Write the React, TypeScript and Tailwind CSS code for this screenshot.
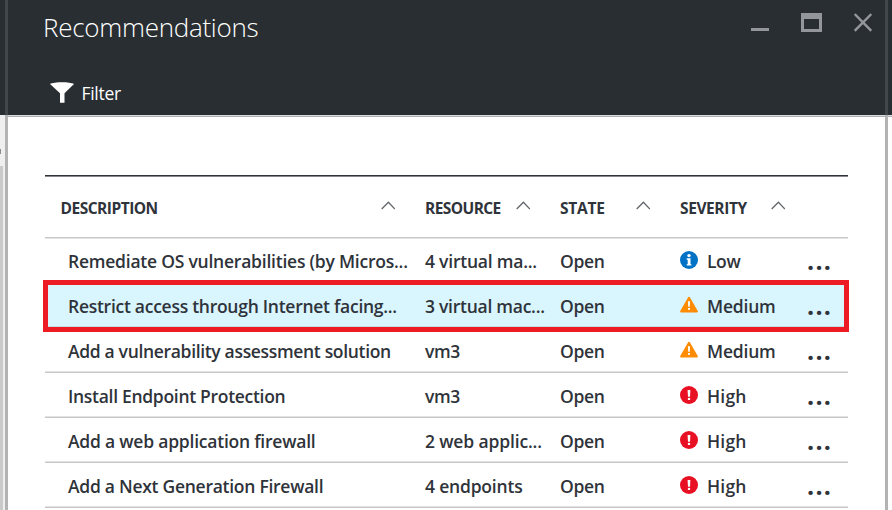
import React from "react";

type Severity = "Low" | "Medium" | "High";

interface Row {
  description: string;
  descTrack: string;
  resource: string;
  resTrack: string;
  severity: Severity;
  selected?: boolean;
}

const rows: Row[] = [
  { description: "Remediate OS vulnerabilities (by Micros...", descTrack: "tracking-[-0.23px]", resource: "4 virtual ma...", resTrack: "tracking-[-0.22px]", severity: "Low" },
  { description: "Restrict access through Internet facing...", descTrack: "tracking-[-0.27px]", resource: "3 virtual mac...", resTrack: "tracking-[-0.26px]", severity: "Medium", selected: true },
  { description: "Add a vulnerability assessment solution", descTrack: "tracking-[-0.33px]", resource: "vm3", resTrack: "tracking-[-0.4px]", severity: "Medium" },
  { description: "Install Endpoint Protection", descTrack: "tracking-[-0.3px]", resource: "vm3", resTrack: "tracking-[-0.4px]", severity: "High" },
  { description: "Add a web application firewall", descTrack: "tracking-[-0.22px]", resource: "2 web applic...", resTrack: "tracking-[-0.15px]", severity: "High" },
  { description: "Add a Next Generation Firewall", descTrack: "tracking-[-0.27px]", resource: "4 endpoints", resTrack: "tracking-[-0.2px]", severity: "High" },
];

const severityTrack: Record<Severity, string> = {
  Low: "tracking-[-0.4px]",
  Medium: "tracking-[-0.2px]",
  High: "tracking-[0.2px]",
};

function SeverityIcon({ severity }: { severity: Severity }) {
  if (severity === "Medium") {
    return (
      <svg className="block h-[18px] w-[18px]" viewBox="0 0 18 18">
        <path d="M9 1.8 L16.9 15.4 H1.1 Z" fill="#ff8c00" stroke="#ff8c00" strokeWidth="2" strokeLinejoin="round" />
        <path d="M7.9 5.2 H10.1 L9.8 10.8 H8.2 Z" fill="#fff" />
        <rect x="8" y="12" width="2" height="1.8" fill="#fff" />
      </svg>
    );
  }
  if (severity === "Low") {
    return (
      <svg className="block h-[18px] w-[18px]" viewBox="0 0 18 18">
        <circle cx="9" cy="9" r="9" fill="#0072c6" />
        <circle cx="9" cy="4.6" r="1.7" fill="#fff" />
        <path d="M6.7 7.3 H10.5 V13.2 H11.4 V14.6 H6.7 V13.2 H7.7 V8.7 H6.7 Z" fill="#fff" />
      </svg>
    );
  }
  return (
    <svg className="block h-[18px] w-[18px]" viewBox="0 0 18 18">
      <circle cx="9" cy="9" r="9" fill="#e81123" />
      <path d="M7.6 4 H10.4 L10 10.8 H8 Z" fill="#fff" />
      <rect x="7.9" y="11.9" width="2.2" height="2.1" fill="#fff" />
    </svg>
  );
}

function Caret() {
  return (
    <svg className="mb-[3px] block h-[9px] w-[14px]" viewBox="0 0 14 9">
      <path d="M0.7 8 L7.4 1.2 L13.9 8" fill="none" stroke="#63676c" strokeWidth="1.3" />
    </svg>
  );
}

function HeaderCell({ label, width, gap, track }: { label: string; width: string; gap: string; track: string }) {
  return (
    <div className={`flex shrink-0 items-center ${width}`}>
      <div className={`shrink-0 pt-px leading-[24px] whitespace-nowrap ${gap}`}>
        <span className={track}>{label}</span>
      </div>
      <Caret />
    </div>
  );
}

export default function App() {
  return (
    <div className="flex h-[510px] w-[892px] overflow-hidden bg-white font-['Open_Sans','Noto_Sans',sans-serif] text-[#2f333a]">
      <div className="flex w-[5px] shrink-0 flex-col bg-[#efefef]">
        <div className="h-[115px] bg-[#292e32]" />
        <div className="mt-[34px] h-[5px] w-px bg-[#8c8c8c]" />
        <div className="mt-[12px] w-[3px] flex-1 bg-[#cacaca]" />
      </div>
      <div className="flex w-[3px] shrink-0 flex-col">
        <div className="h-[115px] bg-[#42474b]" />
        <div className="flex-1 bg-[#b3b3b3]" />
      </div>

      <div className="flex w-[877px] shrink-0 flex-col">
        <header className="flex h-[115px] shrink-0 flex-col bg-[#292e32] text-white">
          <div className="flex h-[56px] justify-between">
            <h1 className="mt-[9px] pl-[35px] text-[26px] leading-[36px] font-light">
              <span className="tracking-[-0.27px]">Recommendations</span>
            </h1>
            <div className="flex pr-[13px] pt-[13px]">
              <div className="mt-[15px] h-[3px] w-[18px] bg-[#93969a]" />
              <div className="ml-[32px] h-[19px] w-[21px] border-[3px] border-t-[6px] border-[#93969a]" />
              <svg className="ml-[32px] block h-[19px] w-[18px]" viewBox="0 0 18 19">
                <path d="M0.7 1 L17.3 17.8 M17.3 1 L0.7 17.8" stroke="#93969a" strokeWidth="2.4" fill="none" />
              </svg>
            </div>
          </div>
          <div className="flex pl-[42px] pt-[24px]">
            <svg className="mt-[2px] block h-[21px] w-[24px]" viewBox="0 0 24 21">
              <path d="M0 2 C4 -0.2 20 -0.2 24 2 L14.5 11.3 V20.8 H10 V11.3 Z" fill="#fff" />
            </svg>
            <span className="ml-[7.5px] text-[17.5px] leading-[26px]">
              <span className="tracking-[-0.3px]">Filter</span>
            </span>
          </div>
        </header>
        <div className="h-[2px] shrink-0 border-t border-[#dcdcdc] bg-[#b0b0b0]" />

        <main className="flex w-[840px] flex-col pl-[37px] pt-[58px]">
          <div className="flex h-[64px] shrink-0 items-center border-t border-b border-t-[#2f333a] border-b-[#e4e4e4] pl-[15.5px] text-[15.5px] font-bold shadow-[inset_0_1px_0_#85888d,inset_0_-1px_0_#c8c8c8]">
            <HeaderCell label="DESCRIPTION" width="w-[364.5px]" gap="w-[320.5px]" track="tracking-[-0.5px]" />
            <HeaderCell label="RESOURCE" width="w-[135px]" gap="w-[91px]" track="tracking-[-0.57px]" />
            <HeaderCell label="STATE" width="w-[120px]" gap="w-[76px]" track="tracking-[-0.25px]" />
            <HeaderCell label="SEVERITY" width="w-[120px]" gap="w-[91px]" track="tracking-[-0.4px]" />
          </div>
          <div className="relative -mt-px flex flex-col">
            {rows.map((row) => (
              <div
                key={row.description}
                className={`flex h-[45px] w-[803px] shrink-0 items-center border-b border-[#c8c8c8] pt-px text-[17.5px] leading-[24px] font-semibold whitespace-nowrap ${row.selected ? "bg-[#d9f5fe] shadow-[inset_0_-1px_0_#cbdbe1]" : "shadow-[inset_0_-1px_0_#e2e2e2]"}`}
              >
                <div className="w-[380px] shrink-0 pl-[23px]"><span className={row.descTrack}>{row.description}</span></div>
                <div className="w-[135px] shrink-0"><span className={row.resTrack}>{row.resource}</span></div>
                <div className="w-[120px] shrink-0"><span className="tracking-[-0.35px]">Open</span></div>
                <div className="mb-px shrink-0"><SeverityIcon severity={row.severity} /></div>
                <div className="w-[109px] shrink-0 pl-[9px]"><span className={severityTrack[row.severity]}>{row.severity}</span></div>
                <div className="mb-px shrink-0 text-[25px] leading-[26px] font-bold"><span className="tracking-[1.3px]">...</span></div>
              </div>
            ))}
            <div className="absolute top-[42px] -left-[2px] h-[52px] w-[806px] border-[5px] border-[#ed1c24]" />
          </div>
        </main>
      </div>

      <div className="flex w-[3px] shrink-0 flex-col">
        <div className="h-[115px] bg-[#42474b]" />
        <div className="flex-1 bg-[#b3b3b3]" />
      </div>
      <div className="flex w-[4px] shrink-0 flex-col">
        <div className="h-[115px] bg-[#292e32]" />
        <div className="h-[2px] border-t border-[#dcdcdc] bg-[#b0b0b0]" />
      </div>
    </div>
  );
}
